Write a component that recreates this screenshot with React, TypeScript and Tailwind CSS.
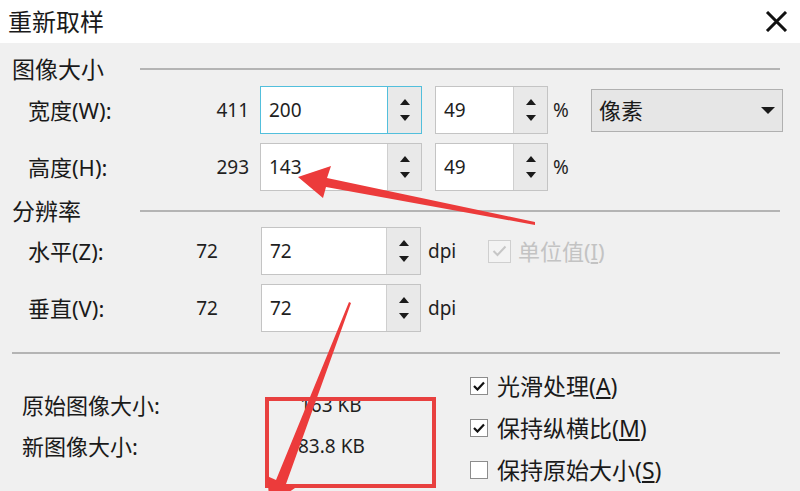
import React from 'react';

const font = "font-['Noto_Sans','Noto_Sans_CJK_SC',sans-serif]";

function Spinner({ divider }: { divider: string }) {
  return (
    <div className={`w-[34px] h-full bg-[#e9e9e9] border-l ${divider} flex flex-col items-center justify-between py-[12px]`}>
      <svg width="10" height="6" viewBox="0 0 10 6">
        <polygon points="5,0 10,6 0,6" fill="#1a1a1a" />
      </svg>
      <svg width="10" height="6" viewBox="0 0 10 6">
        <polygon points="0,0 10,0 5,6" fill="#1a1a1a" />
      </svg>
    </div>
  );
}

function NumBox({ value, width, focused }: { value: string; width: string; focused?: boolean }) {
  return (
    <div
      className={`${width} h-[48px] flex bg-white border ${
        focused ? 'border-[#52bfdc]' : 'border-[#c4c4c4]'
      }`}
    >
      <div className="flex-1 flex items-center pl-[8px] text-[19px] text-[#1f1f1f]">{value}</div>
      <Spinner divider={focused ? 'border-[#52bfdc]' : 'border-[#cfcfcf]'} />
    </div>
  );
}

function Header({ text }: { text: string }) {
  return (
    <div className="h-[30px] flex items-center">
      <span className="w-[128px] text-[23px] text-[#1a1a1a] leading-none">{text}</span>
      <div className="flex-1 h-[2px] bg-[#b4b4b4] mr-[8px]" />
    </div>
  );
}

function Check({ label, hot, checked }: { label: string; hot: string; checked?: boolean }) {
  return (
    <div className="h-[42px] flex items-center">
      <div className="w-[18px] h-[18px] border border-[#8c8c8c] bg-white flex items-center justify-center">
        {checked && (
          <svg width="12" height="10" viewBox="0 0 12 10">
            <path d="M1 5 L4.5 8.5 L11 1.5" stroke="#111" strokeWidth="2.2" fill="none" />
          </svg>
        )}
      </div>
      <span className="ml-[9px] text-[23px] text-[#1a1a1a]">
        {label}(<span className="underline underline-offset-2">{hot}</span>)
      </span>
    </div>
  );
}

export default function App() {
  return (
    <div className={`relative w-[800px] h-[491px] overflow-hidden bg-[#f0f0f0] ${font}`}>
      {/* title bar */}
      <div className="h-[43px] bg-white flex items-center justify-between pl-[8px] pr-[12px]">
        <span className="text-[24px] text-[#1a1a1a]">重新取样</span>
        <svg width="23" height="21" viewBox="0 0 23 21">
          <path d="M2 1 L21 20 M21 1 L2 20" stroke="#111" strokeWidth="3" />
        </svg>
      </div>

      <div className="px-[12px] pt-[11px]">
        <Header text="图像大小" />

        <div className="mt-[2px] pl-[16px] flex items-center">
          <span className="w-[150px] text-[22px] text-[#1a1a1a]">宽度(W):</span>
          <span className="w-[71px] text-right text-[19px] text-[#1f1f1f]">411</span>
          <div className="ml-[11px]">
            <NumBox value="200" width="w-[162px]" focused />
          </div>
          <div className="ml-[13px]">
            <NumBox value="49" width="w-[113px]" />
          </div>
          <span className="ml-[5px] w-[17px] text-[19px] text-[#1f1f1f]">%</span>
          <div className="ml-[21px] w-[192px] h-[43px] bg-[#e6e6e6] border border-[#b0b0b0] flex items-center justify-between pl-[7px] pr-[7px]">
            <span className="text-[22px] text-[#1a1a1a]">像素</span>
            <svg width="14" height="7" viewBox="0 0 14 7">
              <polygon points="0,0 14,0 7,7" fill="#1a1a1a" />
            </svg>
          </div>
        </div>

        <div className="mt-[9px] pl-[16px] flex items-center">
          <span className="w-[150px] text-[22px] text-[#1a1a1a]">高度(H):</span>
          <span className="w-[71px] text-right text-[19px] text-[#1f1f1f]">293</span>
          <div className="ml-[11px]">
            <NumBox value="143" width="w-[162px]" />
          </div>
          <div className="ml-[13px]">
            <NumBox value="49" width="w-[113px]" />
          </div>
          <span className="ml-[5px] text-[19px] text-[#1f1f1f]">%</span>
        </div>

        <div className="mt-[5px]">
          <Header text="分辨率" />
        </div>

        <div className="mt-[1px] pl-[16px] flex items-center">
          <span className="w-[150px] text-[22px] text-[#1a1a1a]">水平(Z):</span>
          <span className="w-[40px] text-right text-[19px] text-[#1f1f1f]">72</span>
          <div className="ml-[43px]">
            <NumBox value="72" width="w-[160px]" />
          </div>
          <span className="ml-[7px] w-[30px] text-[19px] text-[#1f1f1f]">dpi</span>
          <div className="ml-[30px] w-[23px] h-[23px] border border-[#cfcfcf] bg-[#f3f3f3] flex items-center justify-center">
            <svg width="15" height="12" viewBox="0 0 15 12">
              <path d="M1.5 6 L5.5 10 L13.5 1.5" stroke="#c6c6c6" strokeWidth="2" fill="none" />
            </svg>
          </div>
          <span className="ml-[7px] text-[22px] text-[#c3c3c3]">
            单位值(<span className="underline underline-offset-2">I</span>)
          </span>
        </div>

        <div className="mt-[9px] pl-[16px] flex items-center">
          <span className="w-[150px] text-[22px] text-[#1a1a1a]">垂直(V):</span>
          <span className="w-[40px] text-right text-[19px] text-[#1f1f1f]">72</span>
          <div className="ml-[43px]">
            <NumBox value="72" width="w-[160px]" />
          </div>
          <span className="ml-[7px] text-[19px] text-[#1f1f1f]">dpi</span>
        </div>

        <div className="mt-[20px] mr-[8px] h-[2px] bg-[#b4b4b4]" />

        <div className="flex">
          <div className="w-[458px] pt-[31px] pl-[10px] flex flex-col gap-[1px]">
            <div className="h-[40px] flex items-center">
              <span className="w-[278px] text-[22px] text-[#1a1a1a]">原始图像大小:</span>
              <span className="text-[19px] text-[#1f1f1f]">163 KB</span>
            </div>
            <div className="h-[40px] flex items-center">
              <span className="w-[276px] text-[22px] text-[#1a1a1a]">新图像大小:</span>
              <span className="text-[19px] text-[#1f1f1f]">83.8 KB</span>
            </div>
          </div>
          <div className="pt-[11px] flex flex-col">
            <Check label="光滑处理" hot="A" checked />
            <Check label="保持纵横比" hot="M" checked />
            <Check label="保持原始大小" hot="S" />
          </div>
        </div>
      </div>

      {/* annotation: red box */}
      <div className="absolute left-[265px] top-[397px] w-[171px] h-[91px] border-4 border-[#e8403f]" />

      {/* annotation: arrows */}
      <svg className="absolute inset-0 pointer-events-none" width="800" height="491" viewBox="0 0 800 491">
        <polygon
          points="298,177 331,166 327,178 535,222 535,225 326,187 323,198"
          fill="#ec3b3b"
        />
        <polygon
          points="270,505 267,476 276,480 349,302 351,303 286,484 295,488"
          fill="#ec3b3b"
        />
      </svg>
    </div>
  );
}
